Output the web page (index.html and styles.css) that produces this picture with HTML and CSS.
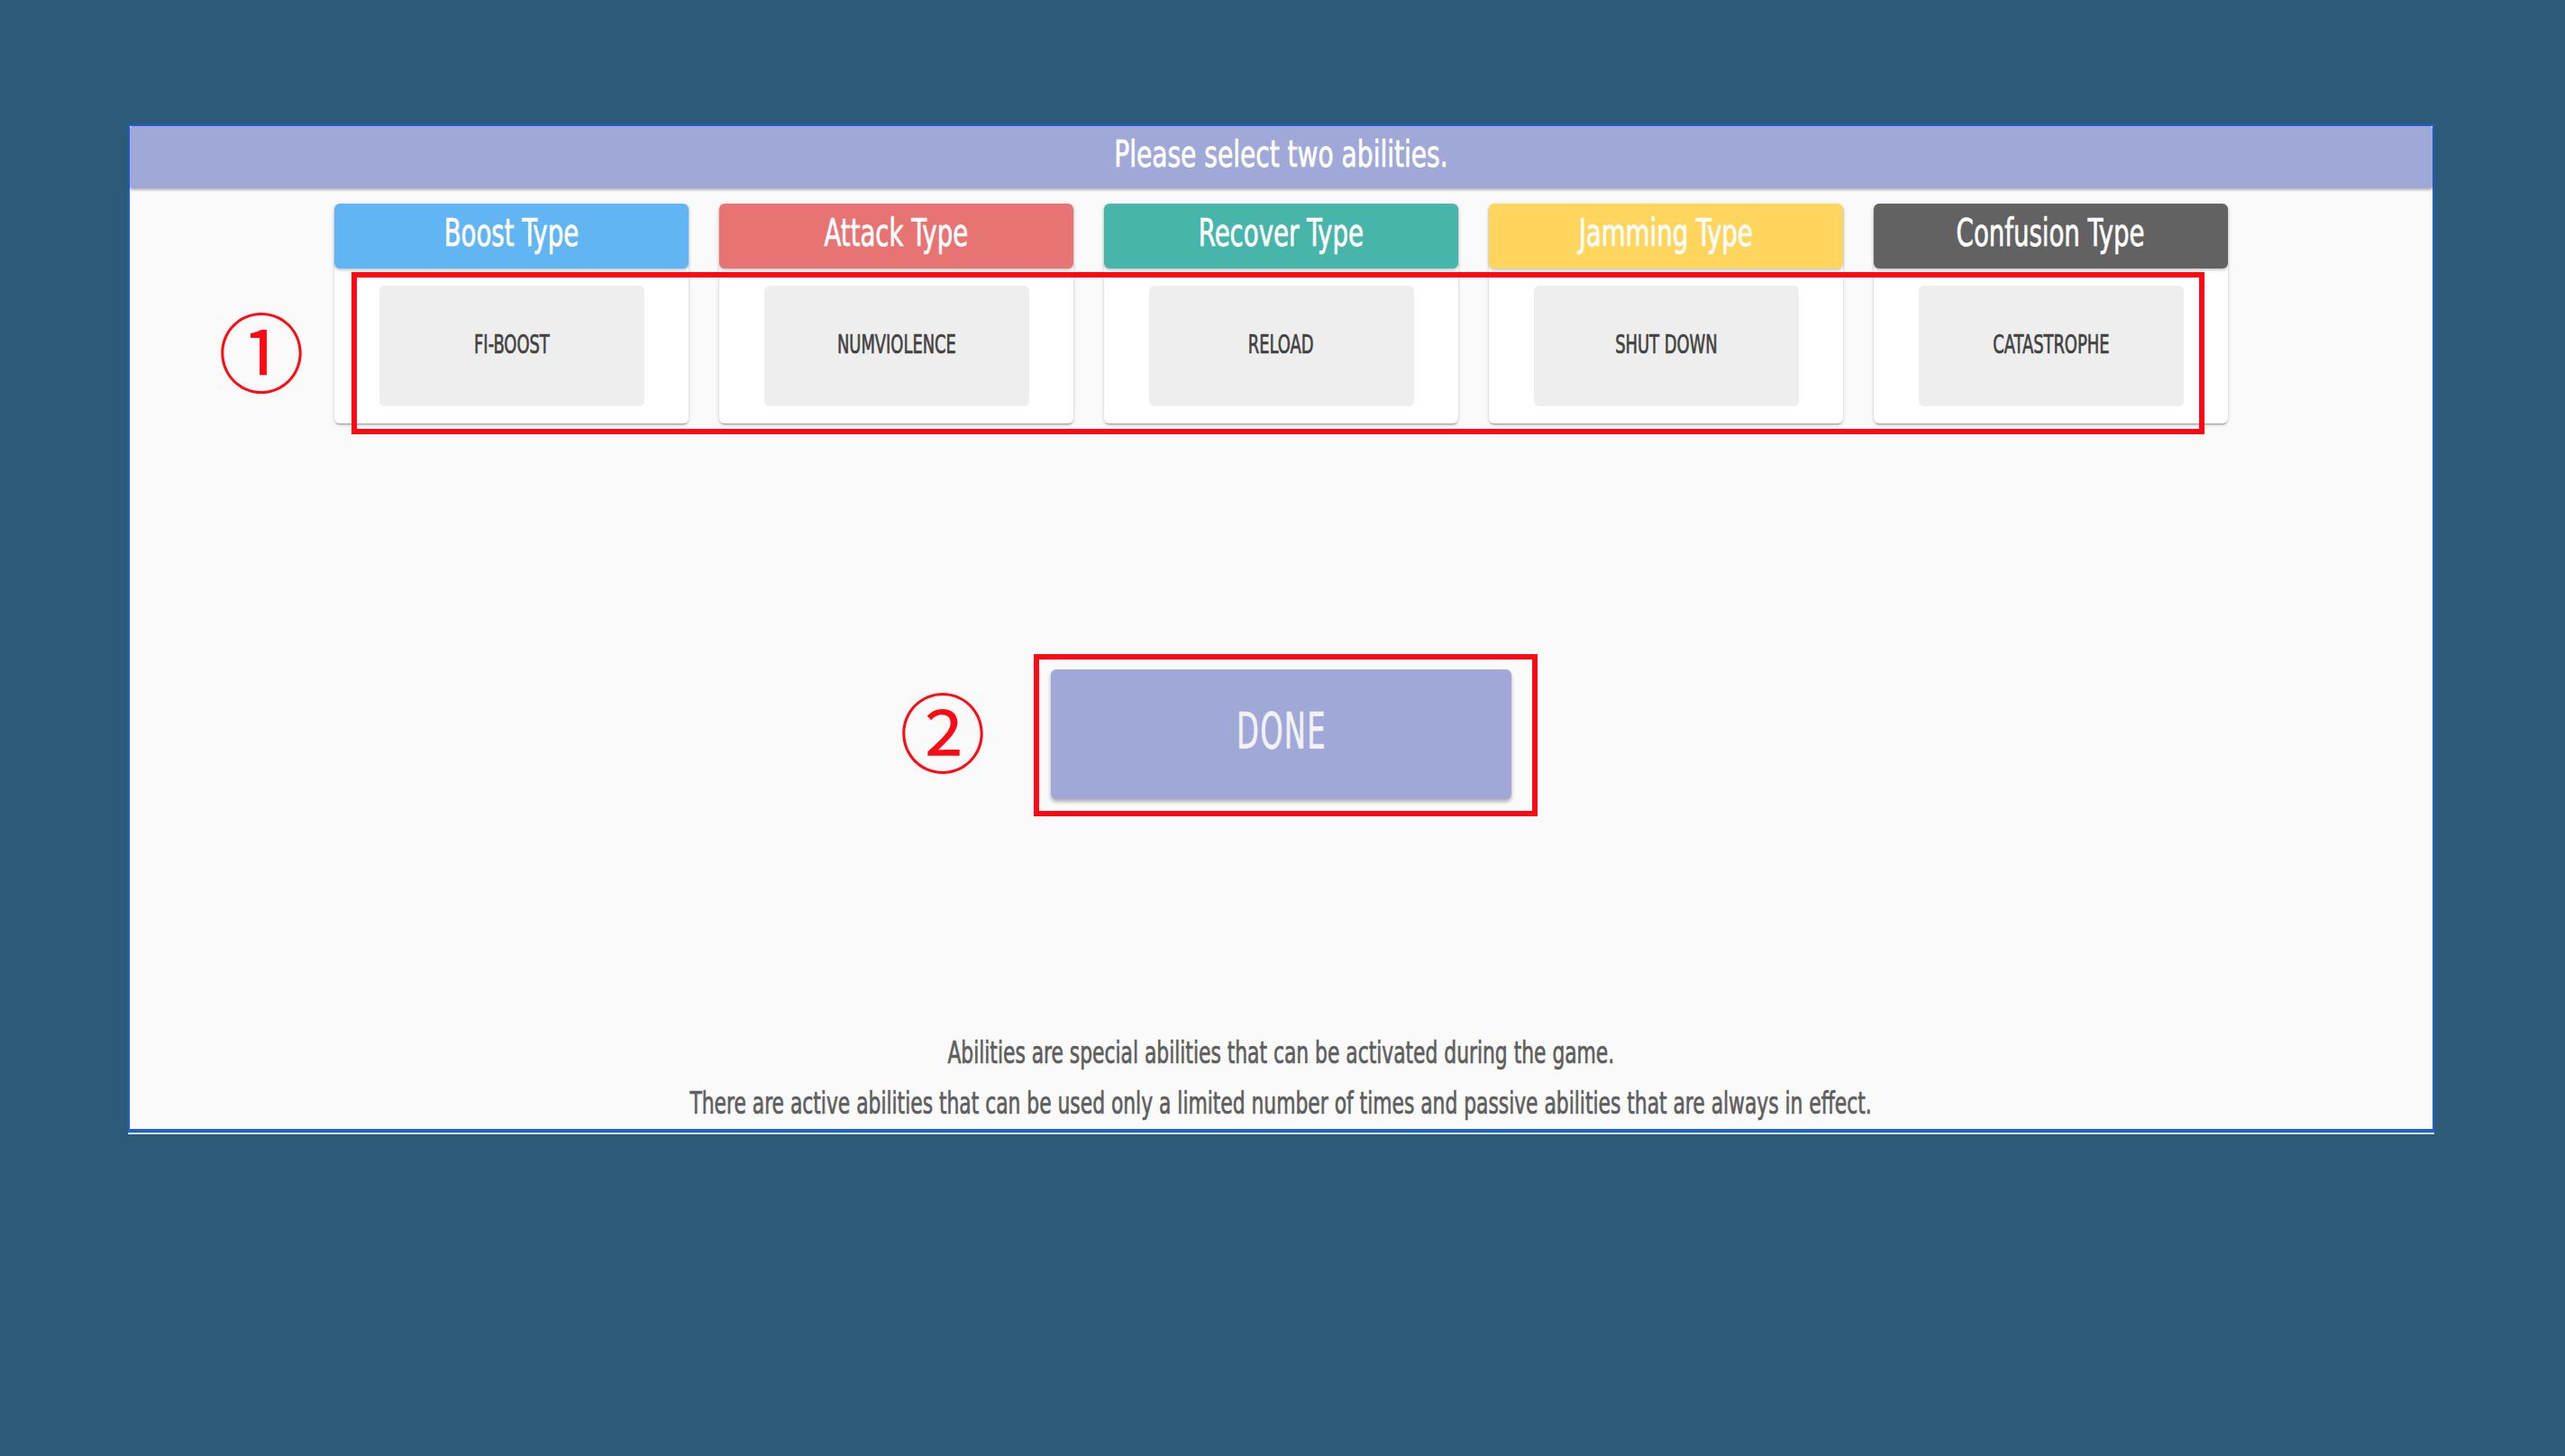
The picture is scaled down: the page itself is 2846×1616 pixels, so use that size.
FILE: index.html
```html
<!DOCTYPE html>
<html>
<head>
<meta charset="utf-8">
<link rel="stylesheet" href="styles.css">
</head>
<body>
<div class="panel">
  <div class="title-bar"><span class="cond title-text">Please select two abilities.</span></div>
  <div class="cards">
    <div class="card">
      <div class="card-head boost"><span class="cond head-text">Boost Type</span></div>
      <div class="card-body"><div class="ability"><span class="cond ability-text">FI-BOOST</span></div></div>
    </div>
    <div class="card">
      <div class="card-head attack"><span class="cond head-text">Attack Type</span></div>
      <div class="card-body"><div class="ability"><span class="cond ability-text">NUMVIOLENCE</span></div></div>
    </div>
    <div class="card">
      <div class="card-head recover"><span class="cond head-text">Recover Type</span></div>
      <div class="card-body"><div class="ability"><span class="cond ability-text">RELOAD</span></div></div>
    </div>
    <div class="card">
      <div class="card-head jamming"><span class="cond head-text">Jamming Type</span></div>
      <div class="card-body"><div class="ability"><span class="cond ability-text">SHUT DOWN</span></div></div>
    </div>
    <div class="card">
      <div class="card-head confusion"><span class="cond head-text">Confusion Type</span></div>
      <div class="card-body"><div class="ability"><span class="cond ability-text">CATASTROPHE</span></div></div>
    </div>
  </div>
  <div class="done-row">
    <button class="done"><span class="cond done-text">DONE</span></button>
  </div>
  <div class="info">
    <p class="info-line"><span class="cond info-text">Abilities are special abilities that can be activated during the game.</span></p>
    <p class="info-line"><span class="cond info-text">There are active abilities that can be used only a limited number of times and passive abilities that are always in effect.</span></p>
  </div>
</div>

<div class="mark box1"></div>
<div class="mark box2"></div>
<div class="num num1">①</div>
<div class="num num2">②</div>
</body>
</html>
```

FILE: styles.css
```css
html, body {
  margin: 0;
  padding: 0;
}
body {
  background: #2e5a7a;
  width: 2846px;
  height: 1616px;
  position: relative;
  overflow: hidden;
  font-family: "Liberation Sans Narrow", "DejaVu Sans Condensed", "Roboto", sans-serif;
}
.cond {
  display: inline-block;
  white-space: nowrap;
  transform-origin: center center;
  -webkit-text-stroke: 0.7px currentColor;
}
.panel {
  position: relative;
  margin: 138px 0 0 142px;
  width: 2559px;
  box-sizing: border-box;
  background: #fafafa;
  border: 2px solid #1c62d4;
  border-bottom-width: 4px;
  box-shadow: 0 2px 0 #d6dde6;
}
.title-bar {
  height: 69px;
  background: #a0a8d8;
  border-radius: 3px;
  box-shadow: 0 2px 3px rgba(0,0,0,0.28);
  display: flex;
  align-items: center;
  justify-content: center;
}
.title-text {
  color: #ffffff;
  font-size: 40px;
  transform: translateY(-4px) scaleX(0.78);
}
.cards {
  display: flex;
  justify-content: center;
  gap: 34px;
  margin-top: 17px;
}
.card {
  width: 393px;
  background: #ffffff;
  border-radius: 6px;
  box-shadow: 0 2px 2px rgba(0,0,0,0.14), 0 3px 1px -2px rgba(0,0,0,0.2), 0 1px 5px rgba(0,0,0,0.12);
}
.card-head {
  height: 72px;
  border-radius: 6px;
  display: flex;
  align-items: center;
  justify-content: center;
  box-shadow: 0 2px 3px rgba(0,0,0,0.22);
  position: relative;
}
.head-text {
  color: #ffffff;
  font-size: 42px;
  transform: translateY(-4px) scaleX(0.73);
}
.boost { background: #62b5f3; }
.attack { background: #e77373; }
.recover { background: #48b5ab; }
.jamming { background: #ffd55e; }
.confusion { background: #626262; }
.card-body {
  padding: 19px 0;
  display: flex;
  justify-content: center;
}
.ability {
  width: 294px;
  height: 134px;
  background: #eeeeee;
  border-radius: 6px;
  display: flex;
  align-items: center;
  justify-content: center;
}
.ability-text {
  color: #424242;
  font-size: 28px;
  transform: translateY(-2px) scaleX(0.71);
}
.done-row {
  display: flex;
  justify-content: center;
  margin-top: 273px;
}
.done {
  width: 511px;
  height: 144px;
  border: none;
  border-radius: 6px;
  background: #a0a8d8;
  box-shadow: 0 3px 4px rgba(0,0,0,0.3);
  padding: 0;
  font-family: inherit;
  display: flex;
  align-items: center;
  justify-content: center;
}
.done-text {
  color: #f2f2f2;
  font-size: 56px;
  letter-spacing: 2px;
  transform: translateY(-5px) scaleX(0.64);
}
.info {
  margin-top: 254px;
  text-align: center;
}
.info-line {
  margin: 0;
  height: 56px;
  line-height: 56px;
}
.info-text {
  color: #5e5e5e;
  font-size: 33px;
  transform: scaleX(0.735);
}
.mark {
  position: absolute;
  border: 6px solid #ff0a14;
  box-sizing: border-box;
}
.box1 {
  left: 390px;
  top: 302px;
  width: 2056px;
  height: 180px;
}
.box2 {
  left: 1147px;
  top: 726px;
  width: 559px;
  height: 180px;
}
.num {
  position: absolute;
  color: #ff0a14;
  font-family: "Noto Sans CJK JP", sans-serif;
  font-size: 96px;
  line-height: 96px;
  width: 120px;
  text-align: center;
}
.num1 {
  left: 230px;
  top: 339px;
}
.num2 {
  left: 986px;
  top: 761px;
}
```
